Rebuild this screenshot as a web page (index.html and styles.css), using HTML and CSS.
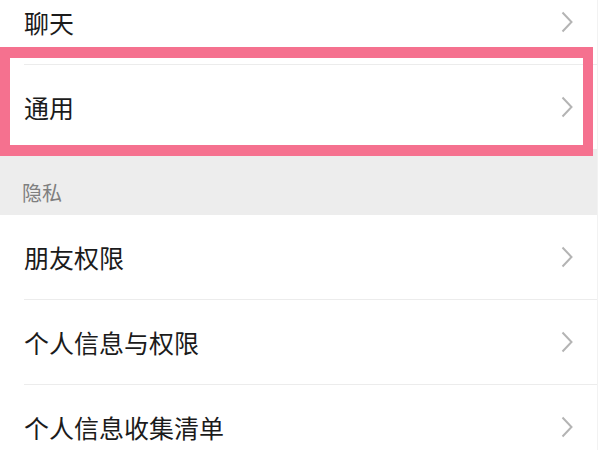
FILE: index.html
```html
<!DOCTYPE html>
<html lang="zh-CN">
<head>
    <meta charset="UTF-8">
    <meta name="viewport" content="width=device-width, initial-scale=1.0">
    <title>设置</title>
    <link rel="stylesheet" href="styles.css">
</head>
<body>
    <div class="page">
        <div class="group">
            <div class="row">
                <div class="row-body">
                    <span class="row-title">聊天</span>
                    <svg class="chevron" width="12" height="22" viewBox="0 0 12 22"><polyline points="1.5,1.5 10.5,11 1.5,20.5"/></svg>
                </div>
            </div>
            <div class="row">
                <div class="row-body">
                    <span class="row-title">通用</span>
                    <svg class="chevron" width="12" height="22" viewBox="0 0 12 22"><polyline points="1.5,1.5 10.5,11 1.5,20.5"/></svg>
                </div>
            </div>
        </div>

        <div class="section-label">隐私</div>

        <div class="group">
            <div class="row">
                <div class="row-body">
                    <span class="row-title">朋友权限</span>
                    <svg class="chevron" width="12" height="22" viewBox="0 0 12 22"><polyline points="1.5,1.5 10.5,11 1.5,20.5"/></svg>
                </div>
            </div>
            <div class="row">
                <div class="row-body">
                    <span class="row-title">个人信息与权限</span>
                    <svg class="chevron" width="12" height="22" viewBox="0 0 12 22"><polyline points="1.5,1.5 10.5,11 1.5,20.5"/></svg>
                </div>
            </div>
            <div class="row">
                <div class="row-body">
                    <span class="row-title">个人信息收集清单</span>
                    <svg class="chevron" width="12" height="22" viewBox="0 0 12 22"><polyline points="1.5,1.5 10.5,11 1.5,20.5"/></svg>
                </div>
            </div>
        </div>

        <!-- выделение пункта "通用" -->
        <div class="highlight"></div>
    </div>
</body>
</html>
```

FILE: styles.css
```css
body {
    margin: 0;
    background-color: #ffffff;
    font-family: "Noto Sans CJK SC", "Noto Sans", sans-serif;
    color: #1b1b1b;
    overflow: hidden;
}

.page {
    position: relative;
    width: 597px;
    margin-top: -20px;
    border-right: 1px solid #f2f2f2;
}

.group {
    background-color: #ffffff;
}

.row {
    padding-left: 24px;
}

.row-body {
    height: 84px;
    display: flex;
    align-items: center;
    justify-content: space-between;
    padding-right: 24px;
}

.row + .row .row-body {
    border-top: 1px solid #ececec;
}

.row-title {
    font-size: 25px;
    line-height: 1;
}

.chevron {
    fill: none;
    stroke: #b4b4b4;
    stroke-width: 2;
}

.section-label {
    height: 66px;
    box-sizing: border-box;
    background-color: #ededed;
    color: #7f7f7f;
    font-size: 20px;
    line-height: 20px;
    padding: 0 0 12px 22px;
    display: flex;
    align-items: flex-end;
}

.highlight {
    position: absolute;
    top: 67px;
    left: 0;
    width: 593px;
    height: 109px;
    box-sizing: border-box;
    border-style: solid;
    border-color: #f5718f;
    border-width: 11px 10px 11px 10px;
}
```
